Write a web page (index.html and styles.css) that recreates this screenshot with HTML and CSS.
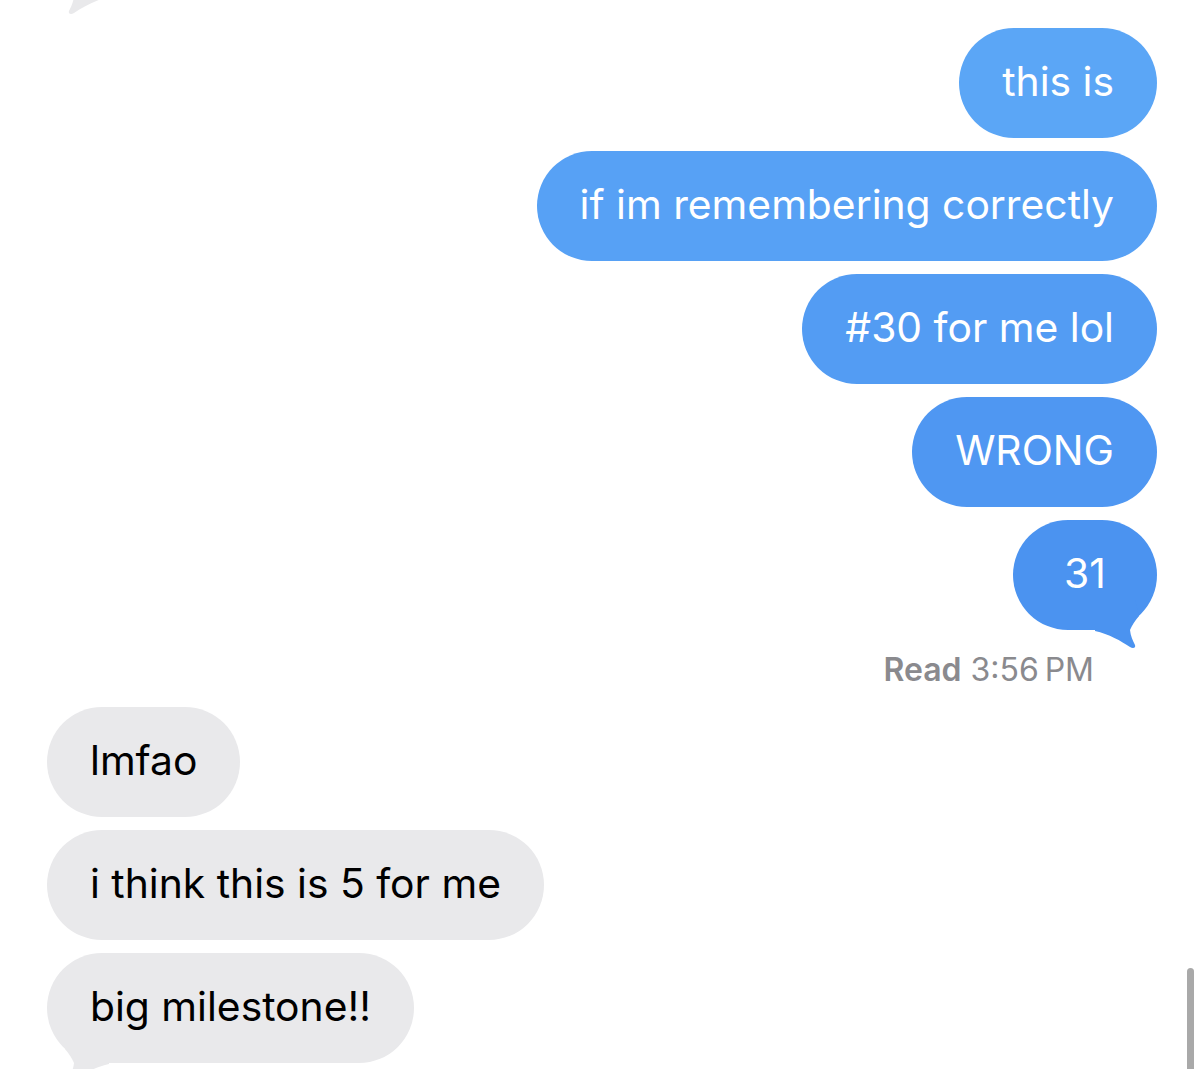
FILE: index.html
```html
<!DOCTYPE html>
<html lang="en">
<head>
<meta charset="utf-8">
<title>Messages</title>
<link rel="stylesheet" href="styles.css">
</head>
<body>
<div class="thread">
  <div class="group received earlier">
    <div class="bubble in has-tail stub-bubble" aria-hidden="true"><svg class="tail tail-in" width="50" height="50" viewBox="0 0 50 50"><path d="M0,28 L0,31 C14,34 26,41 35,47 C38,49 41,48 40,45 C38,41 35.5,36 35,30 C37,25 40,21 44,16 L40,0 L0,0 Z"/></svg></div>
  </div>
  <div class="group sent">
    <div class="bubble out c1">this is</div>
    <div class="bubble out c2">if im remembering correctly</div>
    <div class="bubble out c3">#30 for me lol</div>
    <div class="bubble out c4">WRONG</div>
    <div class="bubble out c5 has-tail">31<svg class="tail tail-out" width="50" height="50" viewBox="0 0 50 50"><path d="M0,28 L0,31 C14,34 26,41 35,47 C38,49 41,48 40,45 C38,41 35.5,36 35,30 C37,25 40,21 44,16 L40,0 L0,0 Z"/></svg></div>
  </div>
  <div class="receipt"><span class="read">Read</span> 3:56&#8201;PM</div>
  <div class="group received">
    <div class="bubble in">lmfao</div>
    <div class="bubble in">i think this is 5 for me</div>
    <div class="bubble in has-tail">big milestone!!<svg class="tail tail-in" width="50" height="50" viewBox="0 0 50 50"><path d="M0,28 L0,31 C14,34 26,41 35,47 C38,49 41,48 40,45 C38,41 35.5,36 35,30 C37,25 40,21 44,16 L40,0 L0,0 Z"/></svg></div>
  </div>
  <div class="scrollbar"></div>
</div>
</body>
</html>
```
FILE: styles.css
```css
html, body {
  margin: 0;
  padding: 0;
  background: #ffffff;
}
body {
  width: 1196px;
  height: 1069px;
  overflow: hidden;
  font-family: Inter, Roboto, "Liberation Sans", sans-serif;
}
.thread {
  position: relative;
  height: 1069px;
  padding: 0 39px 0 47px;
  box-sizing: border-box;
  display: flex;
  flex-direction: column;
}
.group {
  display: flex;
  flex-direction: column;
  gap: 13px;
}
.sent { align-items: flex-end; margin-top: 32px; }
.received { align-items: flex-start; margin-top: 17px; }
.received.earlier { margin-top: -114px; }
.bubble {
  position: relative;
  box-sizing: border-box;
  height: 110px;
  min-width: 144px;
  padding: 28px 43px 32px;
  border-radius: 55px;
  font-size: 40.8px;
  line-height: 50px;
  text-align: center;
  white-space: nowrap;
}
.stub-bubble { width: 240px; }
.out { color: #ffffff; }
.in { background: #e9e9eb; color: #000000; }
.c1 { background: #5ba6f6; }
.c2 { background: #57a1f5; }
.c3 { background: #539cf3; }
.c4 { background: #4f97f2; }
.c5 { background: #4b93f0; }
.tail {
  position: absolute;
  bottom: -20px;
}
.tail-out { right: 12px; fill: #4b93f0; }
.tail-in { left: 12px; fill: #e9e9eb; transform: scaleX(-1); }
.receipt {
  align-self: flex-end;
  margin: 20px 63px 0 0;
  font-size: 32px;
  line-height: 40px;
  color: #8a8a8e;
}
.read { font-weight: 600; }
.scrollbar {
  position: absolute;
  right: 2px;
  top: 968px;
  width: 7px;
  height: 110px;
  border-radius: 4px;
  background: #a9a9a9;
}
```
